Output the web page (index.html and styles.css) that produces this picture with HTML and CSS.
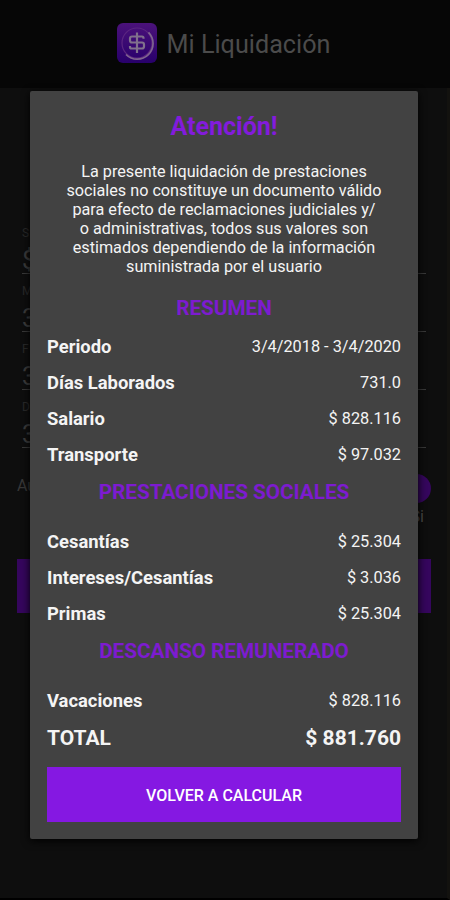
FILE: index.html
```html
<!DOCTYPE html>
<html lang="es">
<head>
<meta charset="utf-8">
<title>Mi Liquidación</title>
<link rel="stylesheet" href="styles.css">
</head>
<body>
<div class="app">
  <header class="bar">
    <svg class="logo" viewBox="0 0 40 40">
      <defs><linearGradient id="g" x1="0" y1="0" x2="0" y2="1"><stop offset="0" stop-color="#4b127a"/><stop offset="1" stop-color="#28006b"/></linearGradient></defs>
      <rect width="40" height="40" rx="6" fill="url(#g)"/>
      <circle cx="20" cy="20" r="15" fill="none" stroke="#5b2680" stroke-width="1.2"/>
      <path d="M31.5 9.3A15.500 15.500 0 0 1 9 31.500" fill="none" stroke="#80658f" stroke-width="1.7"/>
      <path d="M26.500 15.800V15Q26.500 13.500 25 13.500H15Q13 13.500 13 15.500V17.500Q13 19.500 15 19.500H25Q27 19.500 27 21.500V23.500Q27 25.500 25 25.500H14.500Q13 25.500 13 24V23M20 9.500V30" fill="none" stroke="#80708c" stroke-width="2.2"/>
    </svg>
    <h1 class="name">Mi Liquidación</h1>
  </header>
  <main class="form">
    <div class="field"><span class="label">S</span><span class="value">$</span></div>
    <div class="field"><span class="label">M</span><span class="value">3</span></div>
    <div class="field"><span class="label">F</span><span class="value">3</span></div>
    <div class="field"><span class="label">D</span><span class="value">3</span></div>
    <div class="option"><span>Au</span><span class="toggle"><i class="knob"></i><b class="state">Si</b></span></div>
    <div class="submit"></div>
  </main>
</div>
<section class="dialog">
  <h2 class="title">Atención!</h2>
  <p class="notice">La presente liquidación de prestaciones<br>sociales no constituye un documento válido<br>para efecto de reclamaciones judiciales y/<br>o administrativas, todos sus valores son<br>estimados dependiendo de la información<br>suministrada por el usuario</p>
  <h3 class="heading first">RESUMEN</h3>
  <div class="row"><b>Periodo</b><span>3/4/2018 - 3/4/2020</span></div>
  <div class="row"><b>Días Laborados</b><span>731.0</span></div>
  <div class="row"><b>Salario</b><span>$ 828.116</span></div>
  <div class="row"><b>Transporte</b><span>$ 97.032</span></div>
  <h3 class="heading">PRESTACIONES SOCIALES</h3>
  <div class="row"><b>Cesantías</b><span>$ 25.304</span></div>
  <div class="row"><b>Intereses/Cesantías</b><span>$ 3.036</span></div>
  <div class="row"><b>Primas</b><span>$ 25.304</span></div>
  <h3 class="heading">DESCANSO REMUNERADO</h3>
  <div class="row"><b>Vacaciones</b><span>$ 828.116</span></div>
  <div class="row total"><b>TOTAL</b><b>$ 881.760</b></div>
  <button class="action">VOLVER A CALCULAR</button>
</section>
</body>
</html>
```
FILE: styles.css
```css
* { box-sizing: border-box; }
body { margin: 0; width: 450px; height: 900px; position: relative; overflow: hidden; background: #0e0e0e; font-family: Roboto, sans-serif; }
h1, h2, h3, p { margin: 0; }
.app { height: 900px; border-right: 3px solid #13120f; border-bottom: 2px solid #000; }
.bar { height: 88px; margin-right: -3px; padding-right: 3px; background: #060606; display: flex; justify-content: center; align-items: center; gap: 10px; }
.logo { width: 40px; height: 40px; margin-bottom: 2px; }
.name { font-size: 25.2px; font-weight: 400; color: #4b4b4b; }
.form { padding: 138px 21px 0 22px; color: #373737; }
.field { height: 58px; display: flex; flex-direction: column; }
.label { font-size: 12px; line-height: 14px; color: #292929; }
.value { font-size: 25px; line-height: 33px; height: 34px; padding-top: 4px; border-bottom: 1px solid #393939; color: #3b3b3b; }
.option { height: 101px; margin: 0 -5px 0 -5px; padding-top: 16px; display: flex; justify-content: space-between; font-size: 16px; }
.option > span:first-child { padding-top: 2px; }
.toggle { display: flex; flex-direction: column; align-items: flex-end; }
.knob { width: 29px; height: 29px; border-radius: 50%; background: #35065d; }
.state { font-size: 16px; font-weight: 400; line-height: 28px; margin-right: 7px; color: #4a4a4a; }
.submit { height: 54px; margin: 0 -5px; background: #35065d; }
.dialog { position: absolute; left: 30px; top: 91px; width: 388px; height: 748px; padding: 18px 17px 17px; background: #424242; border-radius: 2px; box-shadow: 0 2px 8px #000; color: #f4f4f4; display: flex; flex-direction: column; }
.title { height: 35px; line-height: 36px; font-size: 25px; font-weight: 700; text-align: center; color: #831bdc; }
.notice { margin-top: 18px; font-size: 16.2px; line-height: 19px; text-align: center; }
.heading { height: 51px; padding-top: 2px; line-height: 37px; font-size: 20.7px; font-weight: 700; text-align: center; color: #7d1bd0; }
.first { height: 52px; padding-top: 14px; }
.row { height: 36px; display: flex; justify-content: space-between; align-items: center; font-size: 16.3px; }
.row b { font-size: 18.4px; }
.total { height: 38px; padding-top: 1px; }
.total b { font-size: 21px; }
.action { height: 55px; margin-top: auto; padding: 2px 0 0; border: 0; background: #8518e2; color: #fff; font: 500 16px Roboto, sans-serif; }
```
